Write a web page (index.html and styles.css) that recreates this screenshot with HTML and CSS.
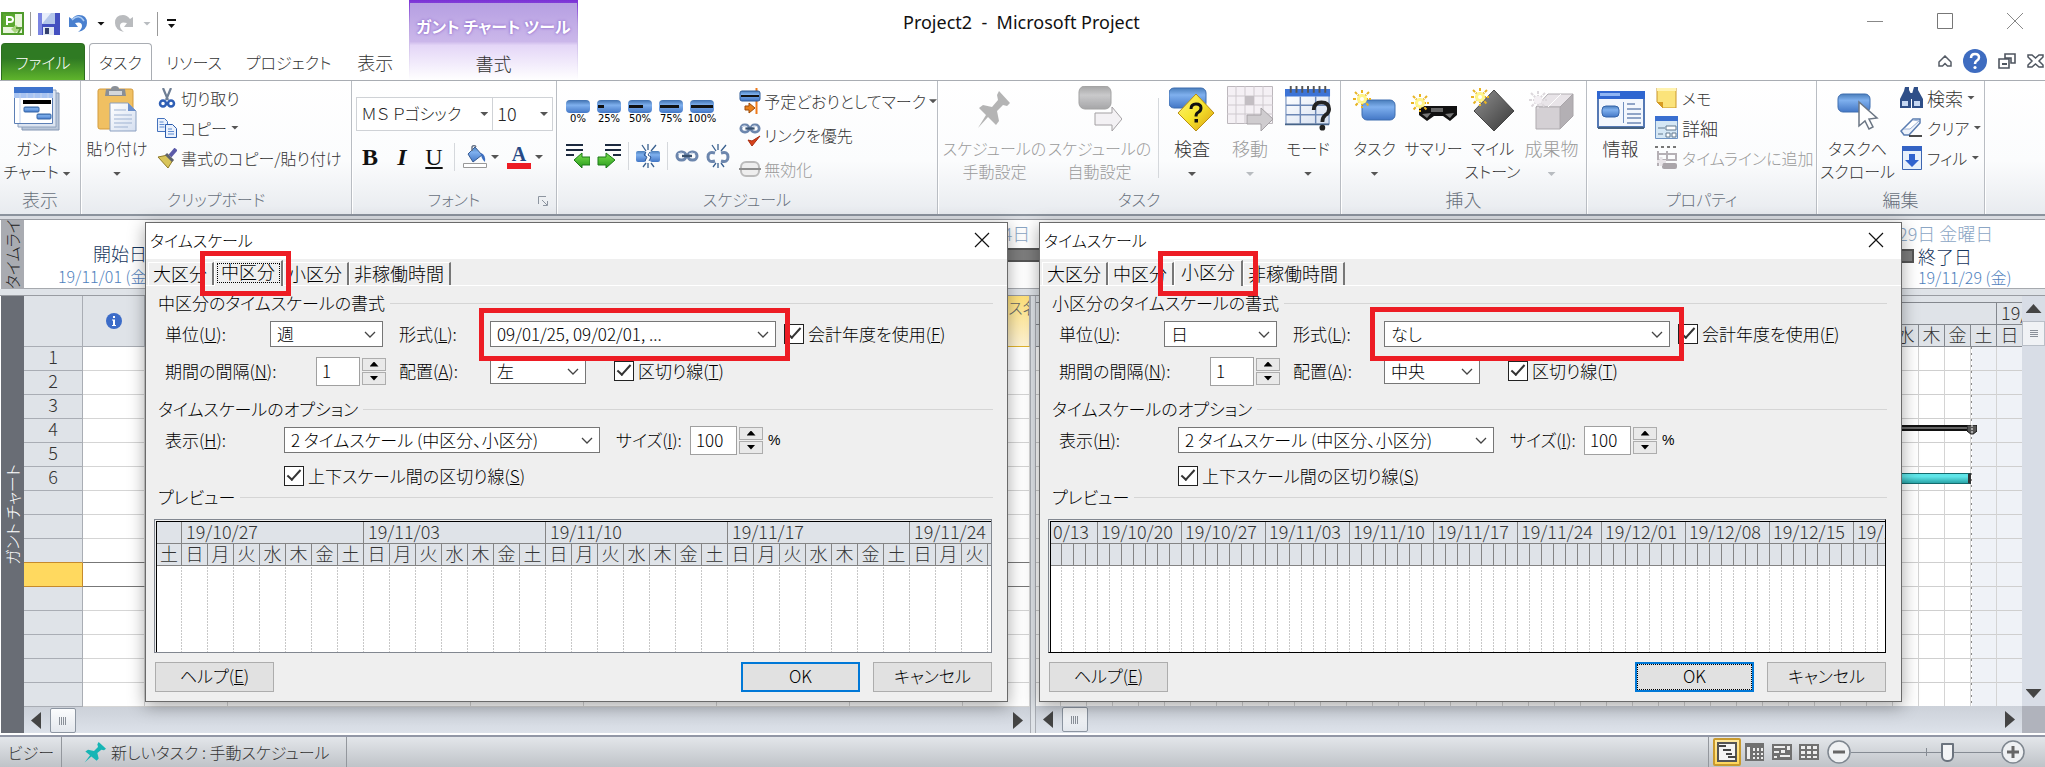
FILE: index.html
```html
<!DOCTYPE html>
<html lang="ja">
<head>
<meta charset="utf-8">
<title>Project2 - Microsoft Project</title>
<link rel="stylesheet" href="styles.css">
</head>
<body>
<svg class="defs" width="0" height="0" aria-hidden="true">
  <defs>
    <linearGradient id="blue" x1="0" y1="0" x2="0" y2="1"><stop offset="0" stop-color="#4a7ebb"/><stop offset=".35" stop-color="#7fb0ee"/><stop offset="1" stop-color="#4377c6"/></linearGradient>
    <linearGradient id="gray" x1="0" y1="0" x2="0" y2="1"><stop offset="0" stop-color="#9b9b9b"/><stop offset=".4" stop-color="#c4c4c6"/><stop offset="1" stop-color="#9d9d9f"/></linearGradient>
    <linearGradient id="gold" x1="0" y1="0" x2="1" y2="1"><stop offset="0" stop-color="#fff27a"/><stop offset=".5" stop-color="#f6e52c"/><stop offset="1" stop-color="#d99a10"/></linearGradient>
    <linearGradient id="dark" x1="0" y1="0" x2="1" y2="1"><stop offset="0" stop-color="#909090"/><stop offset="1" stop-color="#383838"/></linearGradient>
    <linearGradient id="green" x1="0" y1="0" x2="0" y2="1"><stop offset="0" stop-color="#7be04f"/><stop offset="1" stop-color="#279a1c"/></linearGradient>
    <linearGradient id="paper" x1="0" y1="0" x2="1" y2="1"><stop offset="0" stop-color="#ffffff"/><stop offset="1" stop-color="#d5dff0"/></linearGradient>
    <symbol id="spark" viewBox="0 0 18 18"><path d="M9 0v18M0 9h18M2 2l14 14M16 2 2 16" stroke="#e8b422" stroke-width="2" stroke-dasharray="3 1"/><circle cx="9" cy="9" r="5" fill="#fff58a"/><circle cx="9" cy="9" r="2" fill="#fff"/></symbol>
    <symbol id="spark-off" viewBox="0 0 18 18"><path d="M9 0v18M0 9h18M2 2l14 14M16 2 2 16" stroke="#d9d4d9" stroke-width="2" stroke-dasharray="3 1"/><circle cx="9" cy="9" r="4" fill="#f3eff3"/></symbol>
    <symbol id="chev" viewBox="0 0 12 7"><path d="M1 1l5 5 5-5" fill="none" stroke="#444" stroke-width="1.3"/></symbol>
    <symbol id="pin" viewBox="0 0 36 40"><path d="M22 2l11 12-3 3-4-1-6 6 2 10-3 4-8-8L1 39l8-13-7-7 4-3 9 2 6-7-1-5z"/></symbol>
    <symbol id="links" viewBox="0 0 24 14"><g fill="none" stroke="#6c86ad" stroke-width="3"><rect x="2" y="3" width="9" height="8" rx="4"/><rect x="13" y="3" width="9" height="8" rx="4"/></g><path d="M7 7h10" stroke="#38516f" stroke-width="2.4"/><path d="M3 5q3-2 6 0M14 5q3-2 6 0" stroke="#dfe8f5" fill="none"/></symbol>
  </defs>
</svg>

<header class="top">
  <div class="top-left">
    <div class="quick">
      <svg width="23" height="23" viewBox="0 0 23 23"><rect x="1" y="1" width="21" height="21" fill="#e9f5dc" stroke="#4f9b2c" stroke-width="2"/><path d="M2 2h12v13H2z" fill="#5aa82f"/><path d="M6 13V5h3q3 0 3 2.500t-3 2.500H6" fill="none" stroke="#fff" stroke-width="2"/><path d="M10 17l5-4 4 4-5 4z" fill="#a9d67f"/><path d="M15 16h5l-3 5" fill="none" stroke="#5a9a35" stroke-width="2"/></svg>
      <span class="q-sep"></span>
      <button class="flat" aria-label="上書き保存"><svg width="22" height="22" viewBox="0 0 22 22"><path d="M0 0h22v22H0z" fill="#4450c0"/><path d="M0 0h4v22H0z" fill="#7a84e2"/><path d="M4 0h13v11H4z" fill="#e8eefb"/><path d="M13 0h4v11l-13 0z" fill="#b4c6ea"/><path d="M5 14h11v8H5z" fill="#dfe6f2"/><path d="M7 15h4v6H7z" fill="#33406e"/></svg></button>
      <button class="flat undo" aria-label="元に戻す"><svg width="19" height="19" viewBox="0 0 19 19"><path d="M0 3v10h9L6 9q7-2 7 3 0 3-4 6 9-2 9-9 0-8-8-8-4 0-7 4z" fill="#4a80cf"/><path d="M3 6q7-7 12 1" fill="none" stroke="#a8c9f3" stroke-width="1.500"/></svg></button>
      <i class="caret black"></i>
      <button class="flat redo" aria-label="やり直し"><svg width="19" height="19" viewBox="0 0 19 19"><path d="M19 3v10h-9l3-4q-7-2-7 3 0 3 4 6-9-2-9-9 0-8 8-8 4 0 7 4z" fill="#b9bbbe"/></svg></button>
      <i class="caret off"></i>
      <span class="q-sep"></span>
      <svg class="q-more" width="9" height="10" viewBox="0 0 9 10"><path d="M0 0h9v2H0zM1 5h7L4.500 9z" fill="#111"/></svg>
    </div>
    <nav class="tabs">
      <button class="tab file">ファイル</button>
      <button class="tab active">タスク</button>
      <button class="tab t3">リソース</button>
      <button class="tab t4">プロジェクト</button>
      <button class="tab kan">表示</button>
    </nav>
  </div>
  <div class="context">
    <span class="context-title">ガント チャート ツール</span>
    <button class="tab kan">書式</button>
  </div>
  <h1 class="title">Project2 &nbsp;- &nbsp;Microsoft Project</h1>
  <div class="top-right">
    <div class="win">
      <svg width="16" height="16" viewBox="0 0 16 16"><path d="M0 8.500h16" stroke="#888"/></svg>
      <svg width="16" height="16" viewBox="0 0 16 16"><path d="M.5.5h15v15H.5z" fill="none" stroke="#777"/></svg>
      <svg width="16" height="16" viewBox="0 0 16 16"><path d="M0 0l16 16M16 0 0 16" stroke="#888"/></svg>
    </div>
    <div class="win2">
      <svg width="14" height="12" viewBox="0 0 14 12"><path d="M1 7l6-6 6 6v4H9.500L7 8.500 4.500 11H1z" fill="#fff" stroke="#555c66" stroke-width="1.500"/></svg>
      <svg width="24" height="24" viewBox="0 0 24 24"><circle cx="12" cy="12" r="12" fill="#3e6cc0"/><path d="M8 9q0-4 4-4t4 3.500q0 2-2.500 3.500Q12 13 12 15" fill="none" stroke="#fff" stroke-width="2.500"/><circle cx="12" cy="18.500" r="1.600" fill="#fff"/></svg>
      <svg width="18" height="16" viewBox="0 0 18 16"><path d="M7 1h10v9h-4V5H7zM1 6h10v9H1z" fill="#fff" stroke="#4f5660" stroke-width="1.600"/><path d="M4 10h5v2H4z" fill="#4f5660"/></svg>
      <svg width="17" height="14" viewBox="0 0 17 14"><path d="M1 1h4l3.500 3L12 1h4v2l-4 4 4 4v2h-4l-3.500-3L5 13H1v-2l4-4-4-4z" fill="#fff" stroke="#4f5660" stroke-width="1.500"/></svg>
    </div>
  </div>
</header>

<section class="ribbon">
  <div class="group g1">
    <div class="tools">
      <button class="big w70"><svg width="46" height="44" viewBox="0 0 46 44"><path d="M8 6h37v37H8z" fill="#b9c6d8" stroke="#8396b3"/><path d="M4 3h38v37H4z" fill="#dde5f1" stroke="#8fa2be"/><path d="M.5.5h38v36H.5z" fill="#fff" stroke="#5c7fb5"/><path d="M0 0h39v6H0z" fill="#3f74cd"/><path d="M0 6h39v5H0z" fill="#a8c4f2"/><path d="M6 6v30M13 6v5M20 6v5M27 6v5M34 6v5" stroke="#c5d5ee"/><path d="M9 13h28v4H9z" fill="#000"/><rect x="10" y="20" width="15" height="5" rx="1" fill="url(#blue)" stroke="#3767a8"/><rect x="23" y="27" width="14" height="5" rx="1" fill="url(#blue)" stroke="#3767a8"/></svg><span>ガント<br>チャート <i class="caret"></i></span></button>
    </div>
    <h2 class="kan">表示</h2>
  </div>
  <div class="group g2">
    <div class="tools">
      <button class="big w70"><svg width="40" height="46" viewBox="0 0 40 46"><rect x="1" y="3" width="35" height="40" rx="2" fill="#f0c062" stroke="#d39b3c"/><path d="M9 3h5q0-3 4-3t4 3h6l1 7H8z" fill="#8a8f96"/><path d="M12 5h13v4H12z" fill="#d4d7db"/><path d="M13 17h18l8 8v20H13z" fill="url(#paper)" stroke="#8ba0c0"/><path d="M31 17v8h8z" fill="#6b8fcb"/><path d="M17 24h12M17 29h18M17 33h18M17 37h18M17 41h14" stroke="#9fb3d2"/></svg><span>貼り付け<br><i class="caret"></i></span></button>
      <div class="stack">
        <button class="small"><svg width="20" height="20" viewBox="0 0 20 20"><path d="M6 0l5 12M14 0 9 12" stroke="#6f7f95" stroke-width="2.200"/><circle cx="6" cy="15.500" r="3" fill="none" stroke="#2f5fb5" stroke-width="2.500"/><circle cx="14" cy="15.500" r="3" fill="none" stroke="#2f5fb5" stroke-width="2.500"/></svg>切り取り</button>
        <button class="small"><svg width="20" height="20" viewBox="0 0 20 20"><path d="M.5.5h7l3 3v10H.5z" fill="#eaf1fc" stroke="#4472bd"/><path d="M8.500 6.500h7l4 4v9h-11z" fill="#eaf1fc" stroke="#2b5cad"/><path d="M2.500 4h4M2.500 6.500h5M2.500 9h5M11 11h4M11 13.500h6M11 16h6" stroke="#5f8bd0"/></svg>コピー <i class="caret"></i></button>
        <button class="small"><svg width="20" height="20" viewBox="0 0 20 20"><path d="M19 1l-6 7" stroke="#5b5aa8" stroke-width="4"/><path d="M1 9l10-2 5 5-5 8z" fill="#d9c55a" stroke="#8f7a2a"/><path d="M9 6l7 7" stroke="#60636b" stroke-width="3"/></svg>書式のコピー/貼り付け</button>
      </div>
    </div>
    <h2>クリップボード</h2>
  </div>
  <div class="group g3">
    <div class="tools col">
      <div class="fontrow">
        <button class="combo face">ＭＳ Ｐゴシック<i class="caret"></i></button>
        <button class="combo size">10<i class="caret"></i></button>
      </div>
      <div class="fmt">
        <button class="flat bold">B</button><button class="flat ital">I</button><button class="flat undl">U</button>
        <span class="r-sep"></span>
        <button class="flat"><svg width="24" height="24" viewBox="0 0 24 24"><path d="M5 9l7-7 7 8-9 7z" fill="url(#blue)" stroke="#365a92"/><path d="M9 6V2q2-3 4 0" fill="none" stroke="#6a7588" stroke-width="1.500"/><path d="M18 8q5 2 4 9-4-3-4-9z" fill="#3d6fc0"/><path d="M.5 18.500h23v4H.5z" fill="#fff" stroke="#999"/></svg></button><i class="caret"></i>
        <button class="flat fcol"><b>A</b><u></u></button><i class="caret"></i>
      </div>
    </div>
    <h2>フォント</h2>
    <svg class="launch" width="10" height="10" viewBox="0 0 10 10"><path d="M.5 8V.5H8M4 4l5 5M9.500 5v4.500H5" fill="none" stroke="#8d95a0"/></svg>
  </div>
  <div class="group g4">
    <div class="tools">
      <div class="sched">
        <div class="pct">
          <button class="p"><b></b>0%</button><button class="p"><b><i class="q25"></i></b>25%</button><button class="p"><b><i class="q50"></i></b>50%</button><button class="p"><b><i class="q75"></i></b>75%</button><button class="p"><b><i class="q100"></i></b>100%</button>
        </div>
        <div class="linkrow">
          <svg width="24" height="24" viewBox="0 0 24 24"><path d="M0 1h17M0 6h17M0 11h8" stroke="#1c2a3f" stroke-width="2"/><path d="M8 16l8-7v4h8v8h-8v3z" fill="url(#green)" stroke="#1c7a18"/></svg>
          <svg width="24" height="24" viewBox="0 0 24 24"><path d="M8 1h16M8 6h16M16 11h8" stroke="#1c2a3f" stroke-width="2"/><path d="M18 16l-9-7v4H1v8h8v3z" fill="url(#green)" stroke="#1c7a18"/></svg>
          <span class="r-sep"></span>
          <svg width="24" height="24" viewBox="0 0 24 24"><path d="M6 1l4 6M12 0v6M20 1l-5 6M7 23l3-4M12 24v-5M18 23l-3-4" stroke="#39608f" stroke-width="1.300"/><rect x="0" y="7" width="10" height="11" rx="2" fill="url(#blue)"/><rect x="14" y="7" width="10" height="11" rx="2" fill="url(#blue)"/><path d="M10 8l-2 3 3 2-2 4M14 8l-2 3 3 2-2 4" stroke="#2d5590" fill="none"/></svg>
          <span class="r-sep"></span>
          <svg width="24" height="14"><use href="#links"/></svg>
          <svg width="24" height="24" viewBox="0 0 24 24"><path d="M6 1l4 6M12 0v6M20 1l-5 6M7 23l3-4M12 24v-5M18 23l-3-4" stroke="#39608f" stroke-width="1.300"/><path d="M9 9q-7-2-7 4t7 4M15 9q7-2 7 4t-7 4" fill="none" stroke="#6c86ad" stroke-width="3"/></svg>
        </div>
      </div>
      <div class="stack wide">
        <button class="small"><svg width="22" height="26" viewBox="0 0 22 26"><path d="M17.500 0v26" stroke="#ef7a1a" stroke-width="2"/><rect x="1" y="3" width="20" height="10" rx="2" fill="url(#blue)" stroke="#2f5a96"/><path d="M2 8h18" stroke="#111" stroke-width="2"/><path d="M6 18h4v-3l6 5-6 5v-3H6z" fill="#e8801a" stroke="#9e4d0a"/></svg>予定どおりとしてマーク <i class="caret"></i></button>
        <button class="small"><svg width="22" height="26" viewBox="0 0 22 26"><use href="#links" width="22" height="13"/><path d="M9 18l4 6 8-10-8 5z" fill="#d8421c" stroke="#a82d10"/></svg>リンクを優先</button>
        <button class="small off"><svg width="22" height="26" viewBox="0 0 22 26"><rect x="2" y="6" width="18" height="14" rx="5" fill="#eee" stroke="#bbb" stroke-width="2"/><path d="M0 13h22" stroke="#8e8e8e" stroke-width="2"/></svg>無効化</button>
      </div>
    </div>
    <h2>スケジュール</h2>
  </div>
  <div class="group g5">
    <div class="tools">
      <button class="big w105 off"><svg width="36" height="40" viewBox="0 0 36 40" fill="#adadad"><use href="#pin"/></svg><span>スケジュールの<br>手動設定</span></button>
      <button class="big w105 off"><svg width="44" height="46" viewBox="0 0 44 46"><rect x="1" y="0" width="32" height="23" rx="6" fill="url(#gray)" stroke="#9a9a9a"/><path d="M17 27h17v-6l10 12-10 12v-6H17z" fill="#f3f0f3" stroke="#9a979a"/></svg><span>スケジュールの<br>自動設定</span></button>
      <span class="r-sep tall"></span>
      <button class="big w58"><svg width="46" height="46" viewBox="0 0 46 46"><rect x="0" y="2" width="37" height="20" rx="5" fill="url(#blue)" stroke="#3f6eb0"/><path d="M27 8l18 19-18 18L9 27z" fill="url(#gold)" stroke="#b98e12"/><path d="M22 23q0-5 5-5t5 4q0 3-3 4.500-2 1-2 4" fill="none" stroke="#111" stroke-width="3"/><path d="M25.500 33h3.500v3.500h-3.500z" fill="#111"/></svg><span class="kan">検査<br><i class="caret"></i></span></button>
      <button class="big w58 off"><svg width="46" height="46" viewBox="0 0 46 46"><path d="M.5.5h45v37H.5z" fill="#f4eff4" stroke="#b5b0b5"/><path d="M9 0v38M18 0v38M27 0v38M36 0v38M0 10h46M0 19h46M0 28h46" stroke="#c9c4c9"/><path d="M18 10h9v9h-9z" fill="#bdb8bd"/><path d="M20 29h14v-7l12 11-12 12v-7H20z" fill="#cbc7cb" stroke="#9c989c"/></svg><span class="kan">移動<br><i class="caret"></i></span></button>
      <button class="big w58"><svg width="48" height="48" viewBox="0 0 48 48"><path d="M1 9h45v31H1z" fill="url(#paper)" stroke="#5e7fb4"/><path d="M0 3h47v8H0z" fill="#3d74d6"/><path d="M16 11v28M32 11v28M1 20h45M1 30h45" stroke="#6c87b5" stroke-width="1.500"/><path d="M6 0v7M12 0v7M18 0v7M24 0v7M30 0v7M36 0v7M42 0v7" stroke="#555" stroke-width="2"/><path d="M0 40h46" stroke="#466388" stroke-width="2"/><path d="M30 25q0-8 8-8t8 7q0 4-4 6.500-3 2-3 7" fill="none" stroke="#222" stroke-width="4"/><circle cx="39" cy="43.500" r="3" fill="#222"/></svg><span>モード<br><i class="caret"></i></span></button>
    </div>
    <h2>タスク</h2>
  </div>
  <div class="group g6">
    <div class="tools">
      <button class="big w59"><svg width="44" height="46" viewBox="0 0 44 46"><rect x="9" y="14" width="33" height="20" rx="5" fill="url(#blue)" stroke="#3f6eb0"/><use href="#spark" y="4" width="18" height="18"/></svg><span>タスク<br><i class="caret"></i></span></button>
      <button class="big w59"><svg width="46" height="46" viewBox="0 0 46 46"><path d="M8 20h38v9l-7 6-7-5H23l-7 5-8-6z" fill="#111"/><path d="M20 22h12v4H20z" fill="#666"/><path d="M11 28l5 4 4-5M34 28l5 4 4-5" fill="#777"/><use href="#spark" y="8" width="18" height="18"/></svg><span>サマリー</span></button>
      <button class="big w59"><svg width="44" height="46" viewBox="0 0 44 46"><path d="M23 4l20 21-20 20L3 25z" fill="url(#dark)" stroke="#444"/><use href="#spark" x="0" y="2" width="18" height="18"/></svg><span>マイル<br>ストーン</span></button>
      <button class="big w59 off"><svg width="46" height="46" viewBox="0 0 46 46"><path d="M7 21L19 8h25L31 21z" fill="#e6e2e6" stroke="#aaa6aa"/><path d="M31 21L44 8v22L31 43z" fill="#aca8ac" stroke="#a09ca0"/><path d="M7 21h24v22H7z" fill="#d0ccd0" stroke="#a7a3a7"/><path d="M19 21L32 8" stroke="#fff"/><use href="#spark-off" x="0" y="5" width="18" height="18"/></svg><span class="kan">成果物<br><i class="caret"></i></span></button>
    </div>
    <h2 class="kan">挿入</h2>
  </div>
  <div class="group g7">
    <div class="tools">
      <button class="big w59"><svg width="48" height="46" viewBox="0 0 48 46"><path d="M1 6h46v35H1z" fill="#f3f7fd" stroke="#5579b4" stroke-width="2"/><path d="M0 5h48v8H0z" fill="#2f66d0"/><path d="M3 7h20v3H3z" fill="#8fb5f3"/><rect x="5" y="20" width="17" height="11" rx="4" fill="url(#blue)" stroke="#3565aa"/><path d="M26.500 16v21" stroke="#6f8fbf"/><path d="M30 18h8M30 23h14M30 28h14M30 32h14M30 37h14" stroke="#6f89b5" stroke-width="1.500"/><path d="M1 42h46" stroke="#44607f" stroke-width="2"/></svg><span class="kan">情報</span></button>
      <div class="stack">
        <button class="small"><svg width="23" height="20" viewBox="0 0 23 20"><path d="M2 0h19v20H8l-6-6z" fill="#fbe37a" stroke="#c9962a"/><path d="M2 0h19v3H2z" fill="#fff3b0"/><path d="M2 14h6v6z" fill="#d79b22"/></svg>メモ</button>
        <button class="small kan"><svg width="23" height="23" viewBox="0 0 23 23"><path d="M.5.5h22v22H.5z" fill="#d5e7f5" stroke="#6d93c4"/><path d="M0 0h23v5H0z" fill="#3a6fd0"/><path d="M11 10h10v4H11zM11 17h4v4h-4zM17 17h4v4h-4z" fill="#fff" stroke="#61788f"/><path d="M3 12h7M3 18h5" stroke="#61788f"/></svg>詳細</button>
        <button class="small off"><svg width="23" height="24" viewBox="0 0 23 24"><path d="M0 1h3M6 1h3M12 1h3M18 1h3" stroke="#777" stroke-width="2"/><path d="M3 5v15M3 8h18v6H3M12 5v9" fill="none" stroke="#b5b0b5" stroke-width="2"/><rect x="7" y="17" width="15" height="6" rx="2" fill="#aaa5aa"/><path d="M6 11v9M2 15.500h9" stroke="#e8e4e8" stroke-width="3"/></svg>タイムラインに追加</button>
      </div>
    </div>
    <h2>プロパティ</h2>
  </div>
  <div class="group g8">
    <div class="tools">
      <button class="big w75"><svg width="42" height="46" viewBox="0 0 42 46"><rect x="1" y="8" width="32" height="18" rx="5" fill="url(#blue)" stroke="#3f6eb0"/><path d="M22 16l18 16-8 1 4 8-4 2-4-8-6 5z" fill="#fff" stroke="#6b7684" stroke-width="1.500"/></svg><span>タスクへ<br>スクロール</span></button>
      <div class="stack">
        <button class="small kan"><svg width="23" height="21" viewBox="0 0 23 21"><path d="M5 0h4v3l2 4v14H0V12L4 4zM14 0h4v3l5 9v9H12V7z" fill="#2f4f88"/><path d="M10 6h3v6h-3z" fill="#2f4f88"/><path d="M2 14h6v5H2zM14 14h6v5h-6z" fill="#c6d8f3"/></svg>検索 <i class="caret"></i></button>
        <button class="small"><svg width="23" height="20" viewBox="0 0 23 20"><path d="M1 13L13 1h7v4L9 17H4z" fill="#eef3fb" stroke="#5b7db0" stroke-width="1.500"/><path d="M13 2l-9 9h6l9-8z" fill="#fff" stroke="#9cb2d5"/><path d="M9 18h13" stroke="#111" stroke-width="1.500"/></svg>クリア <i class="caret"></i></button>
        <button class="small"><svg width="23" height="24" viewBox="0 0 23 24"><path d="M2.500.5h19v23h-19z" fill="#e8f0fb" stroke="#3c65b0"/><path d="M2 0h20v5H2z" fill="#3463c4"/><path d="M9 8h6v6h4l-7 7-7-7h4z" fill="#2f62ce"/></svg>フィル <i class="caret"></i></button>
      </div>
    </div>
    <h2 class="kan">編集</h2>
  </div>
</section>

<main class="work">
  <section class="timeline">
    <h3 class="side light"><span>タイムライン</span></h3>
    <div class="tl-body">
      <div class="tl-end start"><strong>開始日</strong><span>19/11/01 (金)</span></div>
      <div class="tl-mid"><time>24日</time><i></i></div>
      <div class="tl-end finish"><em>29日 金曜日</em><i></i><strong>終了日</strong><span>19/11/29 (金)</span></div>
    </div>
  </section>
  <section class="gantt">
    <h3 class="side"><span>ガント チャート</span></h3>
    <div class="sheet">
      <table>
        <colgroup><col class="c0"><col class="c1"><col class="c2"><col class="c3"><col class="c4"><col class="c5"><col class="c5"><col class="c4"><col></colgroup>
        <thead><tr><th></th><th><svg width="16" height="16" viewBox="0 0 16 16"><circle cx="8" cy="8" r="8" fill="#3c6cc8"/><path d="M7 3h2v2H7zM6 6.500h3V12h1v1H6v-1h1V7.500H6z" fill="#fff"/></svg></th><th></th><th></th><th></th><th></th><th></th><th></th><th class="sel">リソース名</th></tr></thead>
        <tbody>
          <tr><th>1</th><td></td><td></td><td></td><td></td><td></td><td></td><td></td><td></td></tr>
          <tr><th>2</th><td></td><td></td><td></td><td></td><td></td><td></td><td></td><td></td></tr>
          <tr><th>3</th><td></td><td></td><td></td><td></td><td></td><td></td><td></td><td></td></tr>
          <tr><th>4</th><td></td><td></td><td></td><td></td><td></td><td></td><td></td><td></td></tr>
          <tr><th>5</th><td></td><td></td><td></td><td></td><td></td><td></td><td></td><td></td></tr>
          <tr><th>6</th><td></td><td></td><td></td><td></td><td></td><td></td><td></td><td></td></tr>
          <tr><th></th><td></td><td></td><td></td><td></td><td></td><td></td><td></td><td></td></tr>
          <tr><th></th><td></td><td></td><td></td><td></td><td></td><td></td><td></td><td></td></tr>
          <tr class="before"><th></th><td></td><td></td><td></td><td></td><td></td><td></td><td></td><td></td></tr>
          <tr class="current"><th></th><td></td><td></td><td></td><td></td><td></td><td></td><td></td><td></td></tr>
          <tr><th></th><td></td><td></td><td></td><td></td><td></td><td></td><td></td><td></td></tr>
          <tr><th></th><td></td><td></td><td></td><td></td><td></td><td></td><td></td><td></td></tr>
          <tr><th></th><td></td><td></td><td></td><td></td><td></td><td></td><td></td><td></td></tr>
          <tr><th></th><td></td><td></td><td></td><td></td><td></td><td></td><td></td><td></td></tr>
          <tr><th></th><td></td><td></td><td></td><td></td><td></td><td></td><td></td><td></td></tr>
        </tbody>
      </table>
      <div class="hscroll"><i class="arr l"></i><b></b><i class="arr r"></i></div>
    </div>
    <div class="splitter"></div>
    <div class="chart">
      <div class="ch-head">
        <div class="ch-weeks"><span>19/12/01</span></div>
        <div class="ch-days"><span>水</span><span>木</span><span>金</span><span>土</span><span>日</span></div>
      </div>
      <div class="ch-body">
        <div class="bar summary"><svg width="10" height="10" viewBox="0 0 10 10"><path d="M0 0h10v6l-5 4-5-4z" fill="#555" stroke="#111"/><path d="M5 0v10" stroke="#fff" stroke-dasharray="2 1"/></svg></div>
        <div class="bar task"></div>
      </div>
      <div class="hscroll"><i class="arr l"></i><b></b><i class="arr r"></i></div>
    </div>
    <div class="vscroll"><i class="arr u"></i><b></b><i class="arr d"></i><span></span></div>
  </section>
</main>

<footer class="status">
  <span class="busy">ビジー</span>
  <button class="newtask"><svg width="24" height="22" viewBox="0 0 36 40" preserveAspectRatio="none" fill="#17b5b5"><use href="#pin"/></svg>新しいタスク : 手動スケジュール</button>
  <div class="views">
    <button class="view on" aria-label="ガント チャート"><svg width="20" height="20" viewBox="0 0 20 20"><path d="M1 1h18v18H1z" fill="#f4f4f4" stroke="#555" stroke-width="2"/><path d="M2 4h7M6 8h8M9 12h6M11 15h8" stroke="#444" stroke-width="2"/></svg></button>
    <button class="view" aria-label="タスク配分状況"><svg width="19" height="18" viewBox="0 0 19 18"><path d="M0 0h19v18H0z" fill="#707070"/><path d="M2 4h3v12H2zM8 5h2v3H8zM12 5h2v3h-2zM16 5h2v3h-2zM8 10h2v2H8zM12 10h2v2h-2zM16 10h2v2h-2zM8 14h2v2H8zM12 14h2v2h-2zM16 14h2v2h-2z" fill="#eee"/></svg></button>
    <button class="view" aria-label="チーム プランナー"><svg width="20" height="16" viewBox="0 0 20 16"><path d="M0 0h20v16H0z" fill="#707070"/><path d="M2 2h11v2H2zM15 2h3v4h-3zM2 7h5v2H2zM9 6h4v3H9zM2 12h3v2H2zM8 11h10v2H8z" fill="#eee"/></svg></button>
    <button class="view" aria-label="リソース シート"><svg width="20" height="16" viewBox="0 0 20 16"><path d="M0 0h20v16H0z" fill="#707070"/><path d="M2 2h4v3H2zM8 2h4v3H8zM14 2h4v3h-4zM2 7h4v3H2zM8 7h4v3H8zM14 7h4v3h-4zM2 12h4v2H2zM8 12h4v2H8zM14 12h4v2h-4z" fill="#eee"/></svg></button>
    <button class="zoom" aria-label="縮小"><svg width="24" height="24" viewBox="0 0 24 24"><circle cx="12" cy="12" r="11" fill="#eff1f3" stroke="#7e868f" stroke-width="1.500"/><path d="M6 12h12" stroke="#666" stroke-width="3"/></svg></button>
    <input class="slider" type="range" min="0" max="100" value="66" aria-label="ズーム">
    <button class="zoom" aria-label="拡大"><svg width="24" height="24" viewBox="0 0 24 24"><circle cx="12" cy="12" r="11" fill="#eff1f3" stroke="#7e868f" stroke-width="1.500"/><path d="M6 12h12M12 6v12" stroke="#666" stroke-width="3"/></svg></button>
  </div>
</footer>

<div class="dialog first" role="dialog" aria-labelledby="d1">
  <div class="d-title"><h2 id="d1">タイムスケール</h2><button class="flat" aria-label="閉じる"><svg width="16" height="16" viewBox="0 0 16 16"><path d="M1 1l14 14M15 1 1 15" stroke="#111" stroke-width="1.200"/></svg></button></div>
  <div class="d-tabs">
    <button>大区分</button><button class="on focus">中区分</button><button>小区分</button><button>非稼働時間</button>
  </div>
  <form class="d-page">
    <h3>中区分のタイムスケールの書式</h3>
    <div class="row">
      <label for="u1">単位(<u>U</u>):</label>
      <span class="pick unit"><select id="u1"><option>週</option></select><svg width="12" height="7"><use href="#chev"/></svg></span>
      <label for="f1">形式(<u>L</u>):</label>
      <span class="pick format"><select id="f1"><option>09/01/25, 09/02/01, ...</option></select><svg width="12" height="7"><use href="#chev"/></svg></span>
      <label class="chk"><input type="checkbox" checked>会計年度を使用(<u>F</u>)</label>
    </div>
    <div class="row">
      <label for="n1">期間の間隔(<u>N</u>):</label>
      <span class="spin count"><input id="n1" type="text" value="1"><span class="ud"><button type="button" aria-label="増やす"></button><button type="button" class="dn" aria-label="減らす"></button></span></span>
      <label for="a1">配置(<u>A</u>):</label>
      <span class="pick align"><select id="a1"><option>左</option></select><svg width="12" height="7"><use href="#chev"/></svg></span>
      <label class="chk sep"><input type="checkbox" checked>区切り線(<u>T</u>)</label>
    </div>
    <h3 class="opt">タイムスケールのオプション</h3>
    <div class="row">
      <label for="s1" class="show">表示(<u>H</u>):</label>
      <span class="pick tiers"><select id="s1"><option>2 タイムスケール (中区分、小区分)</option></select><svg width="12" height="7"><use href="#chev"/></svg></span>
      <label for="z1" class="sz">サイズ(<u>I</u>):</label>
      <span class="spin"><input id="z1" type="text" value="100"><span class="ud"><button type="button" aria-label="増やす"></button><button type="button" class="dn" aria-label="減らす"></button></span></span>
      <span class="percent">%</span>
    </div>
    <div class="row tick"><label class="chk"><input type="checkbox" checked>上下スケール間の区切り線(<u>S</u>)</label></div>
    <h3 class="prev">プレビュー</h3>
    <div class="preview wide">
      <div class="weeks"><span></span><span>19/10/27</span><span>19/11/03</span><span>19/11/10</span><span>19/11/17</span><span>19/11/24</span></div>
      <div class="days"><span>土</span><span>日</span><span>月</span><span>火</span><span>水</span><span>木</span><span>金</span><span>土</span><span>日</span><span>月</span><span>火</span><span>水</span><span>木</span><span>金</span><span>土</span><span>日</span><span>月</span><span>火</span><span>水</span><span>木</span><span>金</span><span>土</span><span>日</span><span>月</span><span>火</span><span>水</span><span>木</span><span>金</span><span>土</span><span>日</span><span>月</span><span>火</span><span></span></div>
      <div class="area"></div>
    </div>
    <div class="buttons"><button type="button">ヘルプ(<u>E</u>)</button><button type="button" class="ok">OK</button><button type="button">キャンセル</button></div>
  </form>
  <i class="mark tabmark"></i><i class="mark fmtmark"></i>
</div>

<div class="dialog second" role="dialog" aria-labelledby="d2">
  <div class="d-title"><h2 id="d2">タイムスケール</h2><button class="flat" aria-label="閉じる"><svg width="16" height="16" viewBox="0 0 16 16"><path d="M1 1l14 14M15 1 1 15" stroke="#111" stroke-width="1.200"/></svg></button></div>
  <div class="d-tabs">
    <button>大区分</button><button>中区分</button><button class="on">小区分</button><button>非稼働時間</button>
  </div>
  <form class="d-page">
    <h3>小区分のタイムスケールの書式</h3>
    <div class="row">
      <label for="u2">単位(<u>U</u>):</label>
      <span class="pick unit"><select id="u2"><option>日</option></select><svg width="12" height="7"><use href="#chev"/></svg></span>
      <label for="f2">形式(<u>L</u>):</label>
      <span class="pick format"><select id="f2"><option>なし</option></select><svg width="12" height="7"><use href="#chev"/></svg></span>
      <label class="chk"><input type="checkbox" checked>会計年度を使用(<u>F</u>)</label>
    </div>
    <div class="row">
      <label for="n2">期間の間隔(<u>N</u>):</label>
      <span class="spin count"><input id="n2" type="text" value="1"><span class="ud"><button type="button" aria-label="増やす"></button><button type="button" class="dn" aria-label="減らす"></button></span></span>
      <label for="a2">配置(<u>A</u>):</label>
      <span class="pick align"><select id="a2"><option>中央</option></select><svg width="12" height="7"><use href="#chev"/></svg></span>
      <label class="chk sep"><input type="checkbox" checked>区切り線(<u>T</u>)</label>
    </div>
    <h3 class="opt">タイムスケールのオプション</h3>
    <div class="row">
      <label for="s2" class="show">表示(<u>H</u>):</label>
      <span class="pick tiers"><select id="s2"><option>2 タイムスケール (中区分、小区分)</option></select><svg width="12" height="7"><use href="#chev"/></svg></span>
      <label for="z2" class="sz">サイズ(<u>I</u>):</label>
      <span class="spin"><input id="z2" type="text" value="100"><span class="ud"><button type="button" aria-label="増やす"></button><button type="button" class="dn" aria-label="減らす"></button></span></span>
      <span class="percent">%</span>
    </div>
    <div class="row tick"><label class="chk"><input type="checkbox" checked>上下スケール間の区切り線(<u>S</u>)</label></div>
    <h3 class="prev">プレビュー</h3>
    <div class="preview narrow">
      <div class="weeks"><span>0/13</span><span>19/10/20</span><span>19/10/27</span><span>19/11/03</span><span>19/11/10</span><span>19/11/17</span><span>19/11/24</span><span>19/12/01</span><span>19/12/08</span><span>19/12/15</span><span>19/12/22</span></div>
      <div class="days"></div>
      <div class="area"></div>
    </div>
    <div class="buttons"><button type="button">ヘルプ(<u>E</u>)</button><button type="button" class="ok focus">OK</button><button type="button">キャンセル</button></div>
  </form>
  <i class="mark tabmark"></i><i class="mark fmtmark"></i>
</div>
</body>
</html>
```
FILE: styles.css
```css
* { box-sizing: border-box; }
body {
  margin: 0;
  height: 100vh;
  display: flex;
  flex-direction: column;
  position: relative;
  overflow: hidden;
  background: #fff;
  color: #333;
  font: 300 16px/24px "Noto Sans CJK JP", sans-serif;
  font-feature-settings: "palt";
}
button, input, select { font: inherit; font-feature-settings: inherit; color: inherit; margin: 0; }
button { border: 0; background: none; padding: 0; white-space: nowrap; }
h1, h2, h3 { margin: 0; font-weight: inherit; font-size: inherit; }
svg { display: block; flex: none; }
.defs { position: absolute; }
.kan { font-size: 18px; }
.flat { display: flex; }
.off { color: #9a9a9a; }

.caret {
  display: inline-block;
  width: 8px;
  height: 4px;
  background: #555;
  clip-path: polygon(0 0, 100% 0, 50% 100%);
  vertical-align: middle;
}
.caret.black { background: #111; }
.off .caret, .caret.off { background: #b8bcc0; }

/* title bar and tabs */
.top { flex: none; height: 81px; display: flex; border-bottom: 1px solid #a9adb3; }
.top-left { width: 409px; display: flex; flex-direction: column; }
.quick { height: 45px; display: flex; align-items: center; gap: 6px; padding: 4px 0 0 1px; }
.q-sep { width: 1px; height: 24px; background: #999; margin-right: 1px; }
.undo { margin: 0 3px; }
.redo { margin: 0 4px 0 3px; }
.q-more { margin-left: 2px; }
.tabs { flex: 1; display: flex; padding-left: 1px; }
.tab { display: block; padding: 0; }
.tab.kan { width: 68px; }
.file { width: 84px; color: #fff; background: linear-gradient(#2f7a23, #2f7a23 40%, #5fb42c); border: 1px solid #2c6d1f; border-bottom: 0; border-radius: 4px 4px 0 0; margin-right: 4px; }
.tab.active { width: 64px; height: 37px; background: #fff; border: 1px solid #a9adb3; border-bottom: 0; border-radius: 4px 4px 0 0; }
.t3 { width: 84px; }
.t4 { width: 106px; }
.context {
  width: 169px;
  border: 1px solid #b69be0;
  border-width: 3px 1px 0;
  border-top-color: #7a2fd6;
  border-image: linear-gradient(#7a2fd6, #b69be0 30%, #fff) 3 1 0;
  background: linear-gradient(#b69fe2, #cbb7ea 50%, #e4d6f7 55%, #fff);
  display: flex;
  flex-direction: column;
  align-items: center;
}
.context-title { height: 42px; line-height: 46px; color: #fff; font-weight: 700; white-space: nowrap; text-shadow: 0 0 3px #7a4fc0; }
.context .tab { height: 35px; line-height: 32px; }
.title { flex: 1; padding-left: 325px; font: 18px/44px "Noto Sans", sans-serif; color: #111; white-space: nowrap; }
.top-right { display: flex; flex-direction: column; align-items: flex-end; }
.win { height: 42px; display: flex; align-items: center; gap: 54px; padding-right: 22px; }
.win2 { height: 38px; display: flex; align-items: center; gap: 11px; padding-right: 1px; }

/* ribbon */
.ribbon { flex: none; height: 135px; display: flex; background: linear-gradient(#fff, #fbfcfd 60%, #e8ebef); border-bottom: 2px solid #8b939d; }
.group { position: relative; flex: none; display: flex; flex-direction: column; border-right: 1px solid #b9bdc3; box-shadow: 1px 0 #fff; }
.group h2 { flex: none; text-align: center; line-height: 26px; color: #68707c; height: 28px; }
.tools { flex: 1; min-height: 0; display: flex; padding-top: 2px; }
.g1 { width: 81px; } .g1 .tools { padding-left: 2px; }
.g2 { width: 271px; } .g2 .tools { padding-left: 1px; }
.g3 { width: 205px; }
.g4 { width: 381px; }
.g5 { width: 403px; } .g5 .tools { padding-left: 4px; }
.g6 { width: 246px; } .g6 .tools { padding-left: 4px; }
.g7 { width: 230px; } .g7 .tools { padding-left: 4px; }
.g8 { width: 168px; } .g8 .tools { padding-left: 3px; }
.big { display: flex; flex-direction: column; align-items: center; height: 100px; padding-top: 3px; }
.big svg { height: 46px; }
.big span { line-height: 23px; padding-top: 5px; }
.w70 { width: 70px; } .w105 { width: 105px; } .w58 { width: 58px; } .w59 { width: 59px; } .w75 { width: 75px; }
.big.off svg { opacity: .9; }
.stack { display: flex; flex-direction: column; padding: 0 0 0 5px; }
.stack .small { height: 30px; }
.small { display: flex; align-items: center; gap: 4px; padding-bottom: 1px; }
.stack.wide { padding: 2px 0 0 5px; }
.stack.wide .small { height: 34px; gap: 3px; }
.col { flex-direction: column; }
.fontrow { display: flex; padding: 14px 3px 0 4px; }
.combo { height: 34px; border: 1px solid #cfd2d6; background: #fff; display: flex; align-items: center; justify-content: space-between; padding: 0 4px 3px; color: #222; }
.combo .caret { margin-top: 3px; }
.face { width: 138px; }
.size { width: 61px; margin-left: -1px; font-size: 18px; }
.fmt { display: flex; align-items: center; padding: 12px 0 0 6px; color: #111; gap: 8px; }
.fmt .caret { margin-left: -4px; }
.bold, .ital, .undl { font: 700 24px/28px "Liberation Serif", serif; width: 24px; justify-content: center; }
.ital { font-style: italic; }
.undl { font-weight: 400; text-decoration: underline; }
.r-sep { width: 1px; height: 28px; background: #d5d8dc; }
.r-sep.tall { height: 80px; margin: 15px 4px 0 6px; }
.fcol { flex-direction: column; align-items: center; width: 24px; }
.fcol b { font: 700 20px/18px "Liberation Serif", serif; color: #274a86; }
.fcol u { width: 24px; height: 6px; background: #ed1c24; }
.launch { position: absolute; right: 8px; bottom: 8px; }
.sched { width: 178px; padding: 17px 0 0 9px; }
.pct { display: flex; gap: 7px; }
.p { width: 24px; font: 10px/11px "DejaVu Sans", sans-serif; color: #000; display: flex; flex-direction: column; align-items: center; }
.p b { width: 24px; height: 13px; border-radius: 4px; background: linear-gradient(#3f6fae, #7fb0ee 40%, #4377c6); padding: 5px 1px 0; }
.p i { display: block; height: 3px; background: #111; }
.q25 { width: 6px; } .q50 { width: 14px; } .q75 { width: 19px; } .q100 { width: 22px; }
.linkrow { display: flex; align-items: center; gap: 7px; padding-top: 18px; }

/* workspace */
.work { flex: 1; min-height: 0; display: flex; flex-direction: column; border-top: 3px solid #d9dce1; border-bottom: 2px solid #fff; }
.side { flex: none; width: 23px; margin-left: 1px; background: #696d75; color: #fff; display: flex; justify-content: center; align-items: center; overflow: hidden; }
.side span { writing-mode: vertical-rl; text-orientation: sideways; transform: rotate(180deg); line-height: 23px; white-space: nowrap; }
.side.light { background: #a9abb1; color: #222; align-items: flex-end; }
.timeline { flex: none; height: 76px; display: flex; border-top: 1px solid #999ca2; border-bottom: 6px solid #dfe3e8; }
.tl-body { flex: 1; display: flex; justify-content: space-between; border-bottom: 1px solid #a6a9ae; overflow: hidden; }
.tl-end { display: grid; color: #4f81bd; align-content: start; }
.tl-end strong { font-weight: 300; font-size: 18px; color: #17365d; }
.start { padding: 21px 0 0 34px; grid-template-rows: 23px 24px; }
.start strong { padding-left: 35px; }
.tl-mid { margin-left: auto; width: 50px; margin-right: 845px; color: #8ba6c4; font-size: 18px; line-height: 26px; }
.tl-mid i { display: block; height: 14px; margin-top: 2px; background: #7d7d7d; border: 2px solid #555; border-width: 2px 0; }
.finish { width: 157px; grid-template-columns: 26px 1fr; grid-template-rows: 26px 19px 24px; align-items: center; }
.finish em { grid-column: 1 / 3; font-style: normal; font-size: 18px; color: #8ba6c4; padding-left: 10px; }
.finish i { height: 14px; background: #7d7d7d; border: 2px solid #555; }
.finish strong { padding-left: 4px; }
.finish span { grid-column: 2; padding-left: 4px; }

.gantt { flex: 1; min-height: 0; display: flex; border-top: 1px solid #999ca2; }
.sheet { flex: 0 0 1006px; display: flex; flex-direction: column; overflow: hidden; }
table { border-collapse: separate; border-spacing: 0; table-layout: fixed; width: 1006px; flex: 1; }
.c0 { width: 59px; } .c1 { width: 62px; } .c2 { width: 83px; } .c3 { width: 243px; } .c4 { width: 113px; } .c5 { width: 133px; }
th, td { padding: 0; height: 24px; font-weight: 300; }
th { background: #dfe3e8; border-right: 1px solid #a9adb4; border-bottom: 1px solid #a9adb4; }
tbody th { font-size: 18px; line-height: 17px; padding-bottom: 5px; }
td { border-bottom: 1px solid #d5d5d5; border-right: 1px solid #d5d5d5; }
thead th { height: 51px; padding-top: 0; }
thead svg { margin: 0 auto; }
thead .sel { background: linear-gradient(#ffe17a, #fff4d5); border-bottom-color: #e0b32c; color: #666; text-align: left; padding-left: 4px; vertical-align: top; white-space: nowrap; overflow: hidden; line-height: 22px; }
.before td { border-bottom-color: #777; }
.before th { border-bottom-color: #c68a2b; }
.current th { background: #ffd95f; border-color: #c68a2b; }
.current td { border-bottom-color: #777; }
.splitter { flex: none; width: 6px; background: #dfe3e8; border: 1px solid #a9adb4; border-width: 0 1px; }
.hscroll { flex: none; height: 27px; background: linear-gradient(#ccd1d9, #dde2ea); display: flex; align-items: center; padding: 0 7px; }
.hscroll b { width: 26px; height: 25px; margin-left: 9px; border: 1px solid #8c95a1; border-radius: 2px; background: repeating-linear-gradient(90deg, #8a9099 0 1px, transparent 1px 2px) center / 8px 8px no-repeat, linear-gradient(#fbfcfd, #e3e7ed); }
.arr { width: 10px; height: 17px; background: #444; }
.arr.l { clip-path: polygon(100% 0, 100% 100%, 0 50%); }
.arr.r { clip-path: polygon(0 0, 100% 50%, 0 100%); margin-left: auto; }
.chart { flex: 1; min-width: 0; display: flex; flex-direction: column; }
.ch-head { height: 51px; padding-top: 6px; background: #dfe3e8; border-bottom: 1px solid #84888e; font-size: 18px; }
.ch-weeks, .ch-days { height: 22px; display: flex; justify-content: flex-end; border-top: 1px solid #84888e; line-height: 18px; }
.ch-weeks span { width: 26px; border-left: 1px solid #84888e; overflow: hidden; padding-left: 4px; }
.ch-days span { width: 26px; border-left: 1px solid #84888e; text-align: center; }
.ch-body {
  flex: 1;
  position: relative;
  background:
    linear-gradient(#8a8a8a 2px, transparent 2px) right 50px top / 1px 6px repeat-y,
    linear-gradient(90deg, #d4d4d4 1px, transparent 1px) right top / 26px 100%,
    linear-gradient(transparent 23px, #cfcfcf 23px) left top / 100% 24px,
    linear-gradient(#eff2f7, #eff2f7) right top / 50px 100% no-repeat,
    #fff;
}
.bar { position: absolute; }
.summary { top: 78px; right: 45px; width: 300px; height: 6px; background: #666; border: 1px solid #111; border-width: 2px 0; }
.summary svg { position: absolute; right: 0; top: -2px; }
.task { top: 126px; right: 51px; width: 300px; height: 11px; background: linear-gradient(#5fe5e8 30%, #2aa5a8); border: 1px solid #146b6d; border-right: 3px solid #333; }
.vscroll { flex: none; width: 23px; background: #d8dde6; display: flex; flex-direction: column; align-items: center; }
.vscroll b { width: 23px; height: 25px; background: repeating-linear-gradient(#8a9099 0 1px, transparent 1px 2px) center / 8px 8px no-repeat, #f0f2f5; border: 1px solid #b9bfc8; }
.vscroll span { width: 23px; height: 27px; background: #b0b3bc; }
.arr.u { width: 16px; height: 9px; margin: 8px 0; clip-path: polygon(50% 0, 100% 100%, 0 100%); }
.arr.d { width: 16px; height: 9px; margin: auto 0 8px; clip-path: polygon(0 0, 100% 0, 50% 100%); }

/* status bar */
.status { flex: none; height: 32px; display: flex; align-items: center; background: linear-gradient(#e3e6ea, #bfc3c8); border-top: 2px solid #9297a6; }
.busy { width: 62px; padding-left: 8px; border-right: 1px solid #93979d; line-height: 30px; }
.newtask { display: flex; align-items: center; gap: 3px; padding-left: 22px; width: 285px; height: 30px; border-right: 1px solid #93979d; }
.views { margin-left: auto; border-left: 1px solid #93979d; display: flex; align-items: center; padding: 0 20px 0 4px; height: 30px; }
.view { width: 27px; display: flex; justify-content: center; }
.view.on { width: 28px; height: 28px; align-items: center; background: linear-gradient(#ffe9a0, #ffd65a); border: 2px solid #c99a2e; border-radius: 2px; }
.zoom { margin-left: 5px; }
.slider { appearance: none; width: 150px; height: 24px; margin: 0 -5px 0 0; background: linear-gradient(#858b93, #858b93) center / 100% 1px no-repeat, linear-gradient(#858b93, #858b93) center / 1px 8px no-repeat; }
.slider::-webkit-slider-thumb { appearance: none; width: 13px; height: 19px; background: #f3f4f6; border: 2px solid #6b737e; border-radius: 1px 1px 6px 6px; }

/* dialogs */
.dialog { position: absolute; top: 222px; width: 863px; height: 480px; background: #efefef; border: 1px solid #6a6a6a; box-shadow: 0 4px 16px rgba(0, 0, 0, .35); color: #000; font-size: 17px; }
.first { left: 145px; }
.second { left: 1039px; }
.d-title { height: 36px; background: #fff; display: flex; justify-content: space-between; align-items: center; padding: 0 17px 2px 4px; }
.d-title h2 { font-size: 16px; }
.d-tabs { display: flex; height: 27px; align-items: flex-end; border-bottom: 1px solid #fff; padding-left: 2px; font-size: 18px; }
.d-tabs button { height: 23px; line-height: 19px; padding: 0 5px 2px 4px; border-right: 2px solid #777; border-top: 1px solid #fff; border-left: 1px solid #fff; }
.d-tabs .on { height: 26px; background: #efefef; padding: 0 6px 5px; margin-bottom: -1px; }
.d-tabs .focus { outline: 1px dotted #000; outline-offset: -4px; }
.d-page { padding: 5px 14px 0 12px; }
.d-page h3 { display: flex; align-items: center; gap: 5px; line-height: 24px; height: 24px; white-space: nowrap; }
.d-page h3::after { content: ""; flex: 1; height: 1px; background: #d5d5d5; }
.row { display: flex; align-items: center; padding-left: 7px; height: 36px; }
.row > label { width: 105px; white-space: nowrap; }
.row > .pick + label, .row > .spin + label { width: 91px; }
.row .chk { width: auto; display: flex; align-items: center; margin-left: 8px; }
.row .chk.sep { margin-left: 28px; }
.chk input { appearance: none; flex: none; width: 20px; height: 20px; margin-right: 4px; border: 1px solid #222; background: #fff; display: grid; place-items: center; }
.chk input::after { content: ""; width: 12px; height: 5px; border: 2px solid #333; border-width: 0 0 2px 2px; transform: rotate(-48deg); margin-bottom: 5px; }
.pick { display: grid; align-items: center; height: 26px; }
.pick select { grid-area: 1 / 1; appearance: none; width: 100%; height: 26px; border: 1px solid #767676; border-radius: 0; background: #fff; padding: 0 0 2px 6px; font-weight: 300; }
.pick svg { grid-area: 1 / 1; justify-self: end; margin-right: 7px; pointer-events: none; }
.unit { width: 113px; margin-right: 16px; }
.format { width: 286px; }
.align { width: 96px; }
.tiers { width: 316px; margin-right: 16px; }
.row > .show { width: 119px; }
.row > label.sz { width: 74px; }
.spin { display: flex; align-items: center; gap: 2px; }
.count { margin: 0 13px 0 46px; }
.spin input { width: 47px; height: 29px; border: 1px solid #a0a0a0; background: #fff; padding: 0 0 2px 5px; }
.count input { width: 44px; }
.ud { display: grid; gap: 1px; }
.ud button { width: 24px; height: 13px; border: 1px solid #adadad; background: #e9e9e9; display: grid; place-items: center; }
.ud button::after { content: ""; width: 9px; height: 5px; background: #000; clip-path: polygon(50% 0, 100% 100%, 0 100%); }
.ud .dn::after { clip-path: polygon(0 0, 100% 0, 50% 100%); }
.percent { padding-left: 5px; font: 14px/24px "Liberation Sans", sans-serif; }
.d-page .row:nth-of-type(1) { height: 38px; }
.d-page .opt { margin-top: 8px; }
.opt + .row { height: 38px; }
.row.tick { height: 24px; margin-top: 5px; }
.row.tick .chk { margin-left: 119px; }
.d-page .prev { margin-top: -3px; }
.preview { margin: 10px 1px 0 -4px; height: 134px; border: 1px solid #828790; background: #fff; display: flex; flex-direction: column; overflow: hidden; color: #333; font-size: 18px; box-shadow: inset 1px 1px #efefef, inset 2px 2px #000; padding: 2px 0 0 2px; }
.weeks, .days { display: flex; flex: none; height: 22px; background: #dfe3e8; border-bottom: 1px solid #848484; line-height: 18px; }
.weeks span { flex: none; border-right: 1px solid #848484; padding-left: 4px; overflow: hidden; }
.days span { flex: none; width: 26px; border-right: 1px solid #848484; text-align: center; }
.wide .weeks span { width: 182px; }
.wide .weeks span:first-child, .wide .days span:first-child { width: 25px; }
.narrow { border-color: #828790 #000 #000 #828790; }
.narrow .weeks span { width: 84px; padding-left: 3px; }
.narrow .weeks span:first-child { width: 47px; padding-left: 2px; }
.narrow .days { background: repeating-linear-gradient(90deg, transparent 0 11px, #848484 11px 12px) -1px 0, #dfe3e8; }
.area { flex: 1; background: repeating-linear-gradient(#fff 0 1px, transparent 1px 3px), repeating-linear-gradient(90deg, transparent 0 25px, #c8c8c8 25px 26px) -1px 0; }
.narrow .area { background: repeating-linear-gradient(#fff 0 1px, transparent 1px 3px), repeating-linear-gradient(90deg, transparent 0 11px, #c8c8c8 11px 12px) -1px 0; }
.buttons { display: flex; gap: 13px; padding-top: 9px; margin: 0 1px 0 -3px; }
.buttons button { width: 119px; height: 30px; background: #e1e1e1; border: 1px solid #adadad; padding-bottom: 2px; }
.buttons button:first-child { margin-right: auto; }
.buttons .ok { border: 2px solid #0078d7; }
.buttons .focus { outline: 1px dotted #000; outline-offset: -3px; }

/* red callouts */
.mark { position: absolute; border: 5px solid #ed1c24; pointer-events: none; }
.first .tabmark { left: 54px; top: 28px; width: 91px; height: 45px; }
.first .fmtmark { left: 333px; top: 85px; width: 311px; height: 53px; }
.second .tabmark { left: 118px; top: 28px; width: 100px; height: 45px; }
.second .fmtmark { left: 330px; top: 84px; width: 314px; height: 54px; }
```
